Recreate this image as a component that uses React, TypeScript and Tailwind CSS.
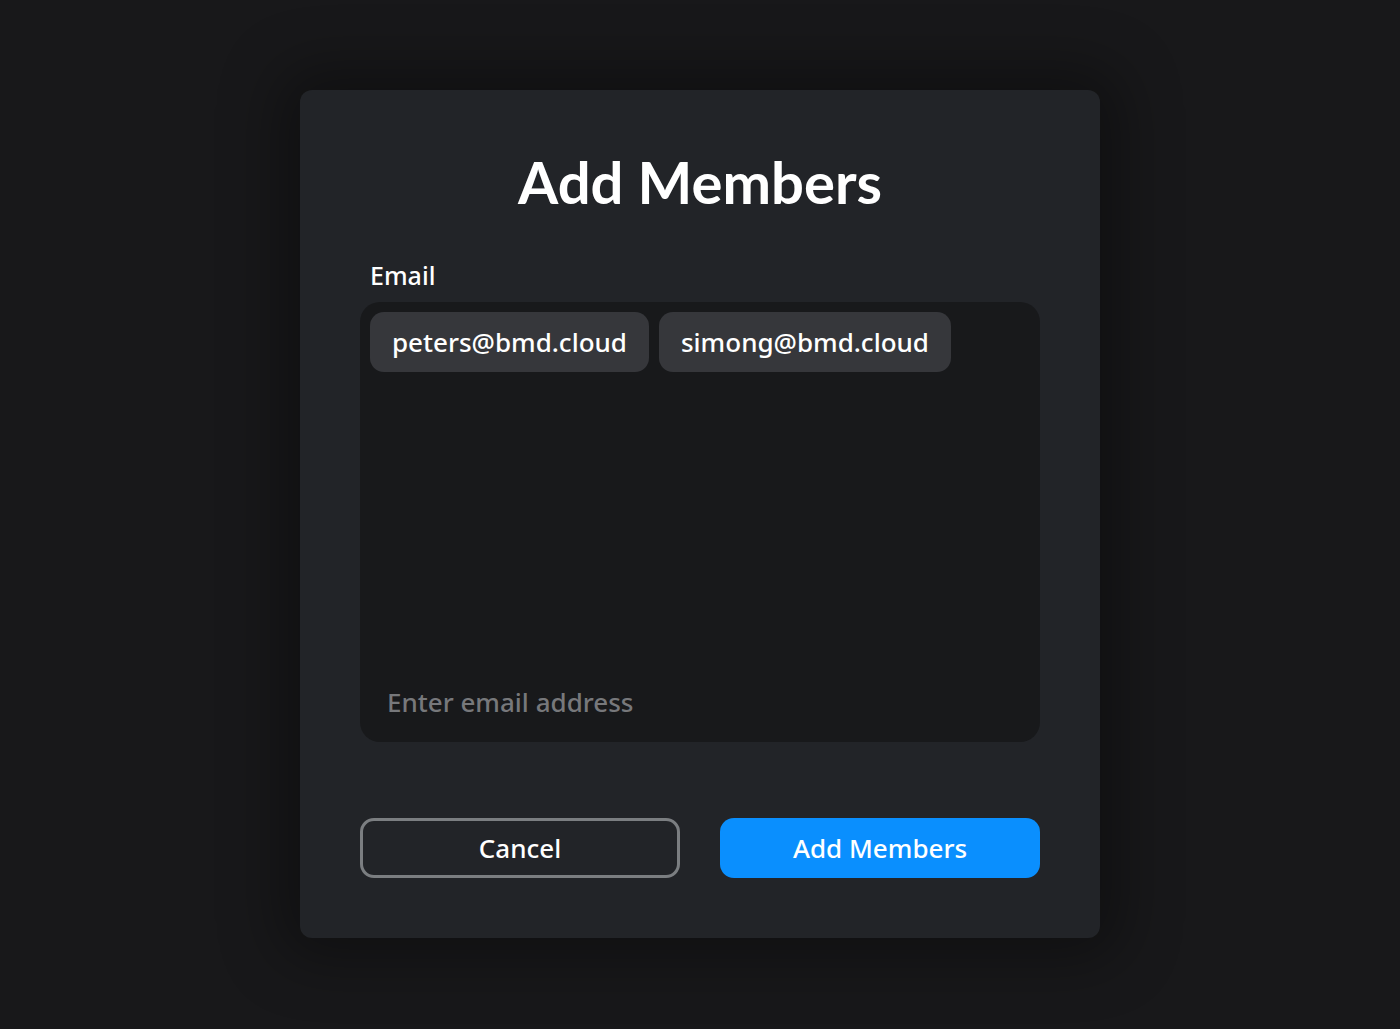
import { useState } from 'react'

const emails = ['peters@bmd.cloud', 'simong@bmd.cloud']

export default function App() {
  const [value, setValue] = useState('')
  return (
    <div className="min-h-screen bg-[#18181a] flex justify-center pt-[90px] font-['Noto_Sans',sans-serif] font-medium">
      <div className="w-[800px] h-[848px] rounded-[12px] bg-[#222428] shadow-[0_0_60px_20px_rgba(0,0,0,0.35)] px-[60px] flex flex-col">
        <h1 className="mt-[62px] text-center text-white text-[58px] leading-[60px] font-bold font-['Lato',sans-serif]">
          Add Members
        </h1>
        <label className="mt-[47px] ml-[10px] text-white text-[25px] leading-[32px]">Email</label>
        <div className="mt-[11px] h-[440px] rounded-[20px] bg-[#18191b] p-[10px] flex flex-col">
          <div className="flex flex-wrap gap-[10px]">
            {emails.map((e) => (
              <span
                key={e}
                className="h-[60px] px-[22px] rounded-[14px] bg-[#36373b] text-white text-[26px] flex items-center"
              >
                {e}
              </span>
            ))}
          </div>
          <div className="flex-1" />
          <input
            value={value}
            onChange={(ev) => setValue(ev.target.value)}
            placeholder="Enter email address"
            className="mb-[12px] mx-[17px] bg-transparent outline-none text-white text-[26px] leading-[36px] font-medium placeholder:text-[#77787b]"
          />
        </div>
        <div className="mt-[76px] flex gap-[40px]">
          <button className="w-[320px] h-[60px] rounded-[14px] border-[3px] border-[#7b7e81] text-white text-[26px] font-medium">
            Cancel
          </button>
          <button className="w-[320px] h-[60px] rounded-[14px] bg-[#0a8ffe] text-white text-[26px] font-medium">
            Add Members
          </button>
        </div>
      </div>
    </div>
  )
}
